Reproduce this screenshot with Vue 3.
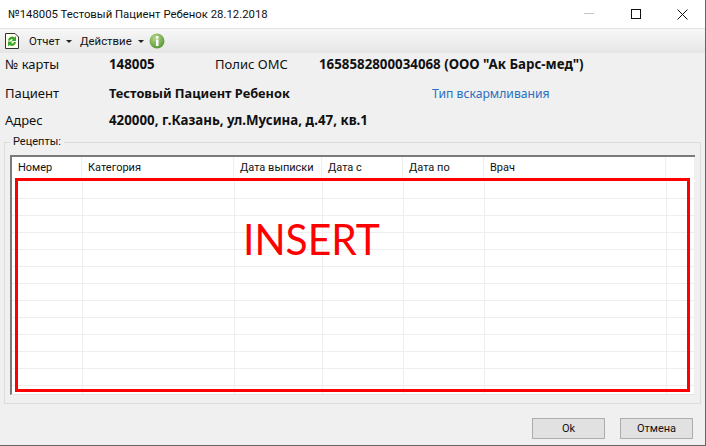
<script setup>
const cols = ['Номер', 'Категория', 'Дата выписки', 'Дата с', 'Дата по', 'Врач', '']
const rows = Array.from({ length: 13 })
</script>

<template>
  <div class="window">
    <header class="title">
      <span class="title-text">№148005 Тестовый Пациент Ребенок 28.12.2018</span>
      <div class="controls">
        <svg width="12" height="2" viewBox="0 0 12 2"><rect width="10" height="1" fill="#c4c4c4" /></svg>
        <svg width="11" height="11" viewBox="0 0 11 11"><rect x=".5" y=".5" width="9" height="9" fill="none" stroke="#111" /></svg>
        <svg width="11" height="11" viewBox="0 0 11 11"><path d="M.5.5l10 10M10.500.5l-10 10" stroke="#111" fill="none" /></svg>
      </div>
    </header>
    <nav class="toolbar">
      <svg class="doc" width="14" height="16" viewBox="0 0 14 16">
        <path d="M.5.500h9.500l3.500 3.500v11.500H.5z" fill="#fffef0" stroke="#333" />
        <path d="M3 7.500a4 4 0 0 1 6.500-3l1.500-1.500v5H6.500l1.500-1.500a2 2 0 0 0-3 1zM11 9a4 4 0 0 1-6.500 3L3 13.500v-5h4.500L6 10a2 2 0 0 0 3-1z" fill="#3aa52a" />
      </svg>
      <span class="menu first">Отчет <i class="caret"></i></span>
      <span class="menu">Действие <i class="caret"></i></span>
      <svg class="info" width="16" height="16" viewBox="0 0 16 16">
        <defs>
          <radialGradient id="g" cx=".4" cy=".3" r=".8"><stop offset="0" stop-color="#b6d88a" /><stop offset="1" stop-color="#4f8f2c" /></radialGradient>
        </defs>
        <circle cx="8" cy="8" r="7.500" fill="url(#g)" />
        <rect x="7" y="3" width="2.500" height="2.500" fill="#fff" />
        <rect x="7" y="6.500" width="2.500" height="6.500" fill="#fff" />
      </svg>
    </nav>
    <section class="info-grid">
      <span>№ карты</span>
      <b>148005</b>
      <span>Полис ОМС</span>
      <b class="span2">1658582800034068 (ООО "Ак Барс-мед")</b>
      <span>Пациент</span>
      <b class="span3 patient">Тестовый Пациент Ребенок</b>
      <a class="link">Тип вскармливания</a>
      <span>Адрес</span>
      <b class="span4">420000, г.Казань, ул.Мусина, д.47, кв.1</b>
    </section>
    <fieldset class="group">
      <legend>Рецепты:</legend>
      <div class="table">
        <div class="row head">
          <div v-for="c in cols" :key="c" class="cell">{{ c }}</div>
        </div>
        <div v-for="(r, i) in rows" :key="i" class="row">
          <div v-for="c in cols" :key="c" class="cell"></div>
        </div>
        <div class="insert"><span>INSERT</span></div>
      </div>
    </fieldset>
    <footer class="footer">
      <button>Ok</button>
      <button>Отмена</button>
    </footer>
  </div>
</template>

<style>
html, body { margin: 0; }
</style>

<style scoped>
.window {
  width: 706px;
  height: 446px;
  box-sizing: border-box;
  display: flex;
  flex-direction: column;
  background: #f0f0f0;
  border-right: 1px solid #666;
  border-bottom: 1px solid #666;
  font-family: "Noto Sans", "Open Sans", sans-serif;
  font-size: 12px;
  color: #111;
  overflow: hidden;
}
.title {
  height: 29px;
  flex: none;
  background: #fff;
  display: flex;
  align-items: center;
  justify-content: space-between;
  padding-left: 8px;
  border-bottom: 1px solid #e3e3e3;
  box-sizing: border-box;
}
.title-text { font-family: Roboto, sans-serif; font-size: 11.350px; }
.controls { display: flex; align-items: center; gap: 35px; padding-right: 17px; }
.toolbar {
  height: 24px;
  flex: none;
  box-sizing: border-box;
  display: flex;
  align-items: center;
  padding-left: 5px;
  background: linear-gradient(#f7f7f7, #e6e6e6);
  font-family: Roboto, sans-serif;
  font-size: 11.400px;
}
.menu { display: inline-flex; align-items: center; gap: 6px; margin-left: 8px; }
.menu.first { margin-left: 10px; }
.caret {
  width: 0; height: 0;
  border-left: 3px solid transparent;
  border-right: 3px solid transparent;
  border-top: 3px solid #222;
}
.info { margin-left: 5px; }
.info-grid {
  flex: none;
  height: 82px;
  box-sizing: border-box;
  display: grid;
  grid-template-columns: 104px 106px 104px 113px 1fr;
  grid-template-rows: 22px 36px 18px;
  padding-left: 5px;
  align-items: center;
  font-size: 13px;
  white-space: nowrap;
}
.info-grid b { font-weight: 700; font-size: 13.300px; }
.info-grid b.patient { font-size: 12.800px; }
.span2 { grid-column: span 2; }
.span3 { grid-column: span 3; }
.span4 { grid-column: span 4; }
.link { color: #2a6fc0; font-size: 12.200px; }
.group {
  margin: 0 4px;
  padding: 0 5px;
  height: 269px;
  box-sizing: border-box;
  border: 1px solid #dcdcdc;
  flex: none;
  min-width: 0;
}
.group legend { padding: 0 3px; margin-left: 0; font-family: Roboto, sans-serif; font-size: 11px; line-height: 14px; }
.table {
  position: relative;
  height: 240px;
  margin-top: 6px;
  background: #fff;
  box-sizing: border-box;
  border-top: 2px solid #7a7a7a;
  border-left: 2px solid #7a7a7a;
  border-bottom: 1px solid #e4e4e4;
  overflow: hidden;
}
.row {
  display: grid;
  grid-template-columns: 71px 152px 88px 81px 81px 182px 1fr;
  height: 17px;
  box-sizing: border-box;
  border-bottom: 1px solid #eee;
}
.row.head {
  height: 22px;
  border-bottom: none;
  margin-bottom: 3px;
  grid-template-columns: 70px 152px 88px 81px 81px 182px 1fr;
  font-family: Roboto, sans-serif;
}
.cell { border-right: 1px solid #eee; }
.head .cell { padding-left: 6px; font-size: 11px; line-height: 22px; white-space: nowrap; }
.insert {
  position: absolute;
  left: 3px;
  top: 21px;
  width: 675px;
  height: 214px;
  box-sizing: border-box;
  border: 3px solid #f00;
  color: #f00;
  font-family: Lato, sans-serif;
  font-size: 42.500px;
  line-height: 52px;
}
.insert span {
  position: absolute;
  left: 225px;
  top: 32px;
  transform: scaleX(.96);
  transform-origin: left center;
}
.footer {
  flex: 1;
  display: flex;
  justify-content: flex-end;
  align-items: flex-start;
  gap: 15px;
  padding: 14px 12px 0 0;
}
.footer button {
  width: 73px;
  height: 21px;
  padding: 0;
  background: #e1e1e1;
  border: 1px solid #adadad;
  font-family: Roboto, sans-serif;
  font-size: 11px;
  color: #111;
}
</style>
